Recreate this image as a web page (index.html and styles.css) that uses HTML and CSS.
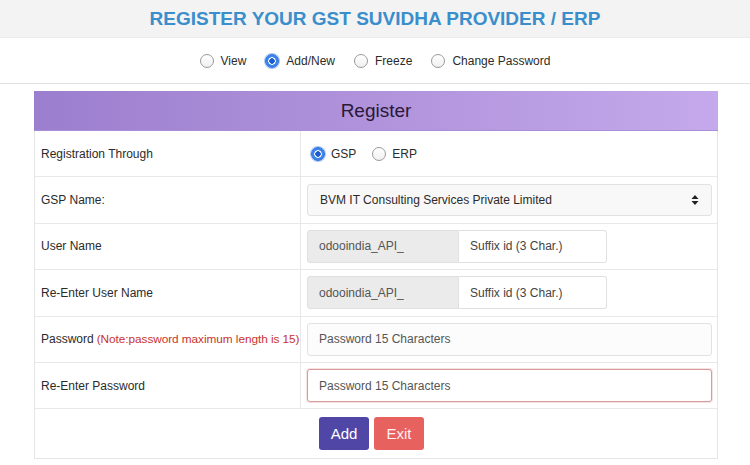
FILE: index.html
```html
<!DOCTYPE html>
<html>
<head>
<meta charset="utf-8">
<link rel="stylesheet" href="styles.css">
</head>
<body>
<header class="topbar">
  <h1 class="title">REGISTER YOUR GST SUVIDHA PROVIDER / ERP</h1>
</header>
<nav class="modes">
  <label class="opt"><span class="radio"></span>View</label>
  <label class="opt"><span class="radio on"></span>Add/New</label>
  <label class="opt"><span class="radio"></span>Freeze</label>
  <label class="opt"><span class="radio"></span>Change Password</label>
</nav>
<main class="panel">
  <div class="panel-head">Register</div>
  <div class="row">
    <div class="lbl">Registration Through</div>
    <div class="val choices">
      <label class="opt small"><span class="radio on"></span>GSP</label>
      <label class="opt small"><span class="radio"></span>ERP</label>
    </div>
  </div>
  <div class="row">
    <div class="lbl">GSP Name:</div>
    <div class="val">
      <div class="select">
        <span>BVM IT Consulting Services Private Limited</span>
        <svg class="arrows" width="8" height="12" viewBox="0 0 8 12"><path d="M4 1 L7.5 5 H0.5 Z M4 11 L7.5 7 H0.5 Z" fill="#222"/></svg>
      </div>
    </div>
  </div>
  <div class="row">
    <div class="lbl">User Name</div>
    <div class="val">
      <div class="pair"><span class="prefix">odooindia_API_</span><span class="suffix">Suffix id (3 Char.)</span></div>
    </div>
  </div>
  <div class="row">
    <div class="lbl">Re-Enter User Name</div>
    <div class="val">
      <div class="pair"><span class="prefix">odooindia_API_</span><span class="suffix">Suffix id (3 Char.)</span></div>
    </div>
  </div>
  <div class="row">
    <div class="lbl">Password <span class="note">(Note:password maximum length is 15)</span></div>
    <div class="val">
      <div class="input">Password 15 Characters</div>
    </div>
  </div>
  <div class="row">
    <div class="lbl">Re-Enter Password</div>
    <div class="val">
      <div class="input invalid">Password 15 Characters</div>
    </div>
  </div>
  <div class="actions">
    <button class="btn add">Add</button>
    <button class="btn exit">Exit</button>
  </div>
</main>
</body>
</html>
```
FILE: styles.css
```css
* { box-sizing: border-box; }
body {
  margin: 0;
  background: #ffffff;
  font-family: "Liberation Sans", Arial, sans-serif;
  color: #2b2b2b;
}
.topbar {
  height: 38px;
  background: #f3f3f3;
  border-bottom: 1px solid #ebebeb;
  display: flex;
  align-items: center;
  justify-content: center;
}
.title {
  margin: 0;
  font-size: 19px;
  font-weight: bold;
  color: #3a8ecb;
  letter-spacing: 0;
}
.modes {
  height: 46px;
  border-bottom: 1px solid #e2e2e2;
  display: flex;
  align-items: center;
  justify-content: center;
  gap: 19px;
  font-size: 12px;
}
.opt {
  display: inline-flex;
  align-items: center;
  gap: 7px;
  color: #2b2b2b;
}
.radio {
  width: 14px;
  height: 14px;
  border-radius: 50%;
  border: 1px solid #9a9a9a;
  background: linear-gradient(#ffffff, #f0f0f0);
  display: inline-block;
}
.radio.on {
  border: 1px solid #2a6bd8;
  background: radial-gradient(circle, #1d5bd0 0 2.5px, #ffffff 3px 3.5px, #3d86ee 4px);
  box-shadow: 0 0 0 1px #a9c8f5;
}
.panel {
  margin: 7px 32px 0 34px;
  border: 1px solid #e6e6e6;
  border-top: none;
}
.panel-head {
  height: 40px;
  margin: 0 -1px;
  background: linear-gradient(90deg, #9c7ecf, #b093db 50%, #c5a9ec);
  color: #2a1838;
  font-size: 19px;
  display: flex;
  align-items: center;
  justify-content: center;
  border-bottom: 1px solid #a990d6;
}
.row {
  display: grid;
  grid-template-columns: 266px 1fr;
  height: 46.4px;
  border-bottom: 1px solid #e8e8e8;
}
.lbl {
  display: flex;
  align-items: center;
  padding-left: 6px;
  font-size: 12px;
  border-right: 1px solid #e8e8e8;
  white-space: nowrap;
}
.note { color: #c9322e; margin-left: 3px; font-size: 11.8px; letter-spacing: -0.05px; }
.val {
  display: flex;
  align-items: center;
  padding: 0 5px 0 6px;
  gap: 16px;
  font-size: 12px;
}
.val.choices { padding-left: 10px; }
.opt.small { gap: 6px; }
.select {
  width: 100%;
  height: 32px;
  border: 1px solid #e2e2e2;
  border-radius: 3px;
  background: #f8f8f8;
  display: flex;
  align-items: center;
  justify-content: space-between;
  padding: 0 12px 0 12px;
  color: #2b2b2b;
}
.pair { display: flex; height: 33px; }
.prefix {
  width: 152px;
  background: #ebebeb;
  border: 1px solid #e0e0e0;
  border-radius: 3px 0 0 3px;
  display: flex;
  align-items: center;
  padding-left: 11px;
  color: #555;
}
.suffix {
  width: 148px;
  background: #ffffff;
  border: 1px solid #e0e0e0;
  border-left: none;
  border-radius: 0 3px 3px 0;
  display: flex;
  align-items: center;
  padding-left: 11px;
  color: #444;
}
.input {
  width: 100%;
  height: 33px;
  border: 1px solid #e2e2e2;
  border-radius: 3px;
  background: #fcfcfc;
  display: flex;
  align-items: center;
  padding-left: 11px;
  color: #555;
}
.input.invalid {
  border: 1px solid #d99a9a;
  background: #ffffff;
  box-shadow: 0 0 0 1px #f6e2e2;
}
.actions {
  height: 49px;
  display: flex;
  align-items: center;
  justify-content: center;
  gap: 5px;
  padding-right: 9px;
}
.btn {
  width: 50px;
  height: 33px;
  border: none;
  border-radius: 3px;
  color: #ffffff;
  font-family: "Liberation Sans", Arial, sans-serif;
  font-size: 15px;
  padding: 0;
}
.btn.add { background: #4f46a6; }
.btn.exit { background: #e7615e; color: #fff0f0; }
```
